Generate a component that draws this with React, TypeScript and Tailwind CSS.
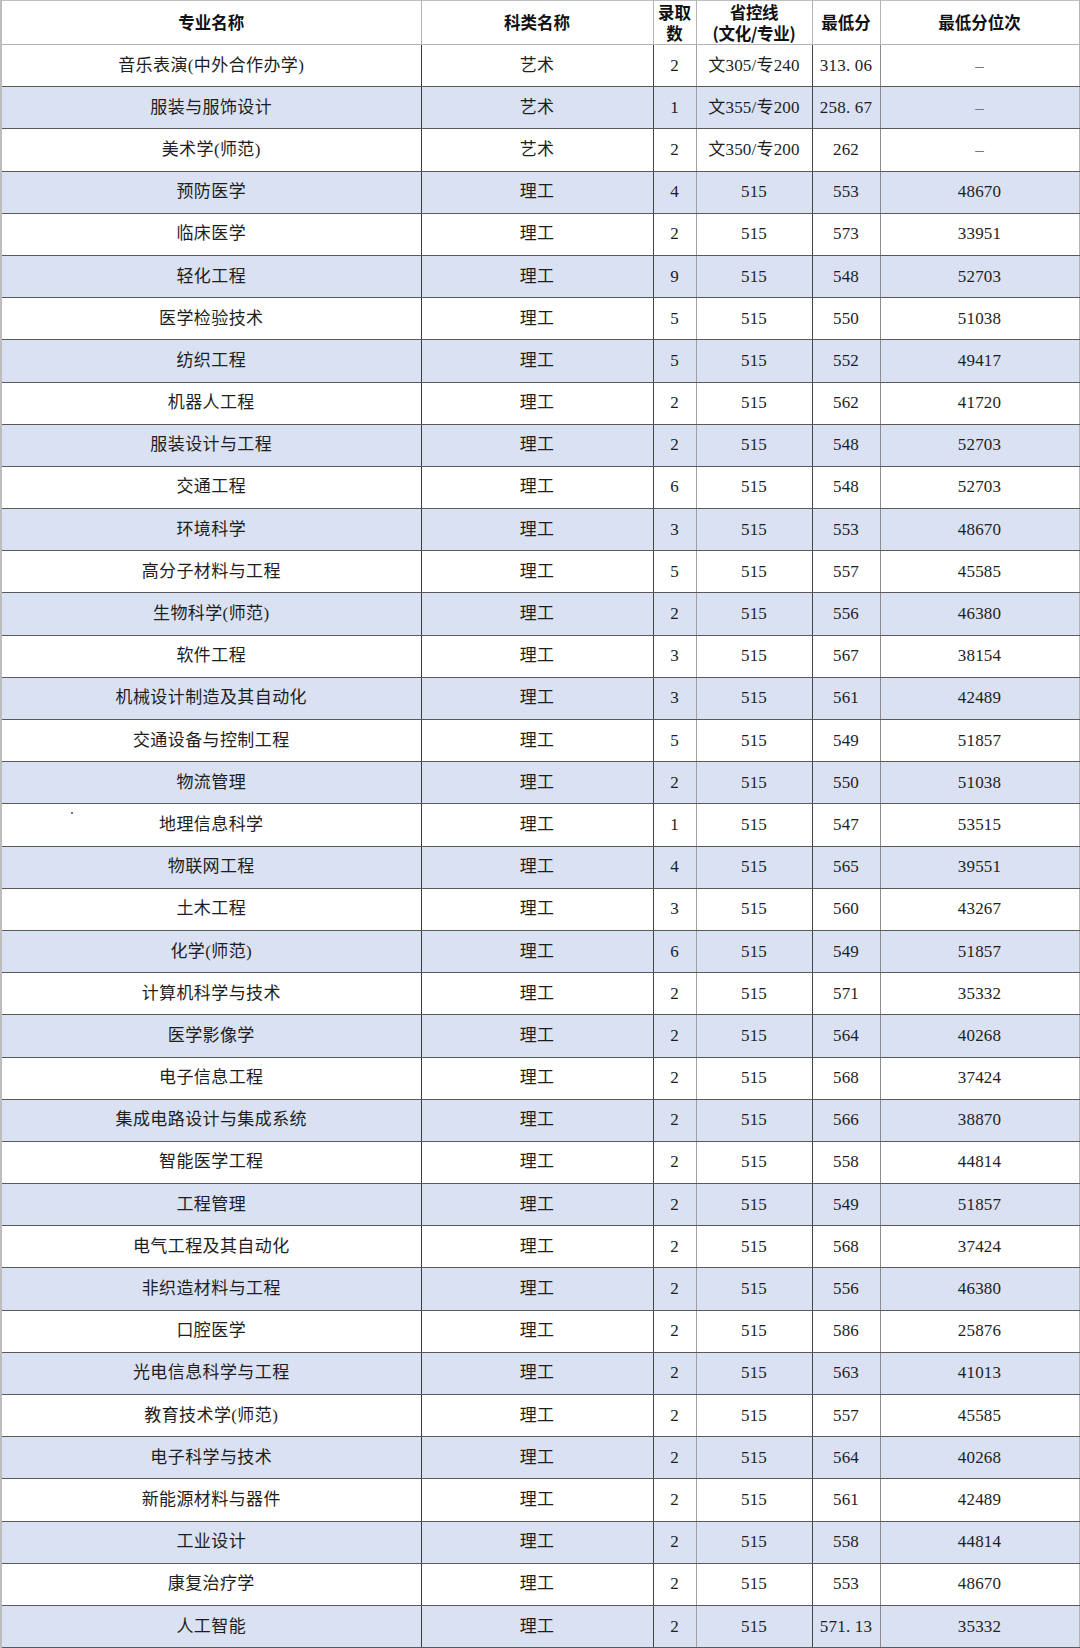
import type { FC } from 'react';

type Row = [string, string, string, string, string, string];

const rows: Row[] = [
  ['音乐表演(中外合作办学)', '艺术', '2', '文305/专240', '313. 06', '–'],
  ['服装与服饰设计', '艺术', '1', '文355/专200', '258. 67', '–'],
  ['美术学(师范)', '艺术', '2', '文350/专200', '262', '–'],
  ['预防医学', '理工', '4', '515', '553', '48670'],
  ['临床医学', '理工', '2', '515', '573', '33951'],
  ['轻化工程', '理工', '9', '515', '548', '52703'],
  ['医学检验技术', '理工', '5', '515', '550', '51038'],
  ['纺织工程', '理工', '5', '515', '552', '49417'],
  ['机器人工程', '理工', '2', '515', '562', '41720'],
  ['服装设计与工程', '理工', '2', '515', '548', '52703'],
  ['交通工程', '理工', '6', '515', '548', '52703'],
  ['环境科学', '理工', '3', '515', '553', '48670'],
  ['高分子材料与工程', '理工', '5', '515', '557', '45585'],
  ['生物科学(师范)', '理工', '2', '515', '556', '46380'],
  ['软件工程', '理工', '3', '515', '567', '38154'],
  ['机械设计制造及其自动化', '理工', '3', '515', '561', '42489'],
  ['交通设备与控制工程', '理工', '5', '515', '549', '51857'],
  ['物流管理', '理工', '2', '515', '550', '51038'],
  ['地理信息科学', '理工', '1', '515', '547', '53515'],
  ['物联网工程', '理工', '4', '515', '565', '39551'],
  ['土木工程', '理工', '3', '515', '560', '43267'],
  ['化学(师范)', '理工', '6', '515', '549', '51857'],
  ['计算机科学与技术', '理工', '2', '515', '571', '35332'],
  ['医学影像学', '理工', '2', '515', '564', '40268'],
  ['电子信息工程', '理工', '2', '515', '568', '37424'],
  ['集成电路设计与集成系统', '理工', '2', '515', '566', '38870'],
  ['智能医学工程', '理工', '2', '515', '558', '44814'],
  ['工程管理', '理工', '2', '515', '549', '51857'],
  ['电气工程及其自动化', '理工', '2', '515', '568', '37424'],
  ['非织造材料与工程', '理工', '2', '515', '556', '46380'],
  ['口腔医学', '理工', '2', '515', '586', '25876'],
  ['光电信息科学与工程', '理工', '2', '515', '563', '41013'],
  ['教育技术学(师范)', '理工', '2', '515', '557', '45585'],
  ['电子科学与技术', '理工', '2', '515', '564', '40268'],
  ['新能源材料与器件', '理工', '2', '515', '561', '42489'],
  ['工业设计', '理工', '2', '515', '558', '44814'],
  ['康复治疗学', '理工', '2', '515', '553', '48670'],
  ['人工智能', '理工', '2', '515', '571. 13', '35332'],
];

// 每列右侧竖线颜色
const colBorder = [
  'border-r-[#3c3c3c]',
  'border-r-[#444444]',
  'border-r-[#a0a0a0]',
  'border-r-[#444444]',
  'border-r-[#8c8c8c]',
  'border-r-[#b4b4b4]',
];

const headCls =
  'border-r border-r-[#b4b4b4] border-b border-b-[#b4b4b4] p-0 text-center align-middle text-[16.5px] font-bold leading-[21px] text-[#111]';

const Header: FC = () => (
  <tr className="h-[44px]">
    <th className={headCls}>专业名称</th>
    <th className={headCls}>科类名称</th>
    <th className={headCls}>
      <div>录取</div>
      <div>数</div>
    </th>
    <th className={`${headCls} tracking-[-0.3px]`}>
      <div>省控线</div>
      <div>(文化/专业)</div>
    </th>
    <th className={headCls}>最低分</th>
    <th className={headCls}>最低分位次</th>
  </tr>
);

export default function App() {
  return (
    <div className="relative h-[1648px] w-[1080px] overflow-hidden bg-white text-[#1e1e1e]">
      <table
        className="w-[1078px] table-fixed border-collapse border-t border-l-[2px] border-t-[#bdbdbd] border-l-[#bdbdbd]"
        style={{ fontFamily: '"Noto Sans CJK SC", "Liberation Sans", sans-serif' }}
      >
        <colgroup>
          <col className="w-[420px]" />
          <col className="w-[232px]" />
          <col className="w-[43px]" />
          <col className="w-[116px]" />
          <col className="w-[68px]" />
          <col className="w-[199px]" />
        </colgroup>
        <thead>
          <Header />
        </thead>
        <tbody>
          {rows.map((r, i) => (
            <tr
              key={r[0]}
              className={`h-[42.2px] ${i % 2 === 1 ? 'bg-[#d9e1f2]' : 'bg-white'}`}
            >
              {r.map((v, j) => (
                <td
                  key={j}
                  className={`border-r border-b border-b-[#5a5a5a] p-0 text-center align-middle whitespace-nowrap text-[17px] leading-[20px] ${j === 0 ? 'tracking-[0.4px]' : 'tracking-[0.2px]'} ${colBorder[j]} ${v === '–' ? 'text-[#777]' : ''}`}
                  style={{
                    fontFamily: '"Liberation Serif", "Noto Sans CJK SC", serif',
                  }}
                >
                  {v}
                </td>
              ))}
            </tr>
          ))}
        </tbody>
      </table>
      <span className="absolute top-[812px] left-[71px] h-[2px] w-[2px] bg-[#777]" />
    </div>
  );
}
